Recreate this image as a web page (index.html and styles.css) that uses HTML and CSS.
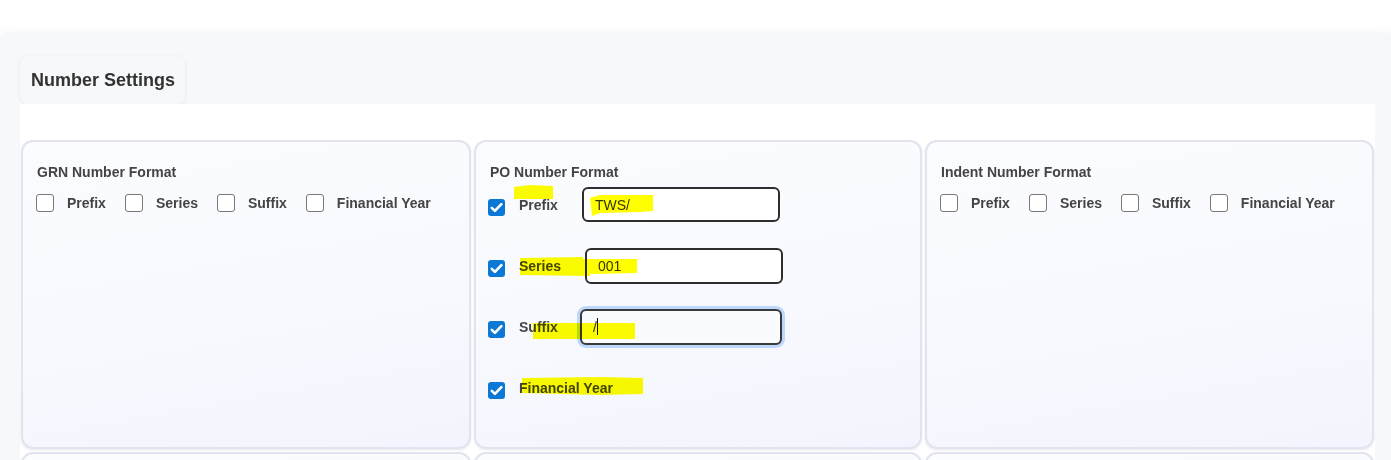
FILE: index.html
```html
<!DOCTYPE html>
<html lang="en">
<head>
<meta charset="utf-8">
<title>Number Settings</title>
<link rel="stylesheet" href="styles.css">
</head>
<body>
<div class="page">
  <div class="panel">
    <div class="tab">Number Settings</div>
    <div class="content">
      <div class="grid">
        <section class="card">
          <h3 class="card-title">GRN Number Format</h3>
          <div class="inline-opts">
            <label class="opt"><span class="box"></span><span class="lbl">Prefix</span></label>
            <label class="opt"><span class="box"></span><span class="lbl">Series</span></label>
            <label class="opt"><span class="box"></span><span class="lbl">Suffix</span></label>
            <label class="opt"><span class="box"></span><span class="lbl">Financial Year</span></label>
          </div>
        </section>
        <section class="card">
          <h3 class="card-title">PO Number Format</h3>
          <div class="stack">
            <div class="row">
              <span class="box checked"><svg viewBox="0 0 16 16" width="15" height="15"><path d="M3 8.4 L6.3 11.6 L13.2 4.4" fill="none" stroke="#fff" stroke-width="2.8" stroke-linecap="round" stroke-linejoin="round"/></svg></span>
              <span class="lbl">Prefix</span>
              <div class="field">TWS/</div>
            </div>
            <div class="row">
              <span class="box checked"><svg viewBox="0 0 16 16" width="15" height="15"><path d="M3 8.4 L6.3 11.6 L13.2 4.4" fill="none" stroke="#fff" stroke-width="2.8" stroke-linecap="round" stroke-linejoin="round"/></svg></span>
              <span class="lbl">Series</span>
              <div class="field tall">001</div>
            </div>
            <div class="row">
              <span class="box checked"><svg viewBox="0 0 16 16" width="15" height="15"><path d="M3 8.4 L6.3 11.6 L13.2 4.4" fill="none" stroke="#fff" stroke-width="2.8" stroke-linecap="round" stroke-linejoin="round"/></svg></span>
              <span class="lbl">Suffix</span>
              <div class="field focused">/<span class="caret"></span></div>
            </div>
            <div class="row">
              <span class="box checked"><svg viewBox="0 0 16 16" width="15" height="15"><path d="M3 8.4 L6.3 11.6 L13.2 4.4" fill="none" stroke="#fff" stroke-width="2.8" stroke-linecap="round" stroke-linejoin="round"/></svg></span>
              <span class="lbl">Financial Year</span>
            </div>
          </div>
        </section>
        <section class="card">
          <h3 class="card-title">Indent Number Format</h3>
          <div class="inline-opts">
            <label class="opt"><span class="box"></span><span class="lbl">Prefix</span></label>
            <label class="opt"><span class="box"></span><span class="lbl">Series</span></label>
            <label class="opt"><span class="box"></span><span class="lbl">Suffix</span></label>
            <label class="opt"><span class="box"></span><span class="lbl">Financial Year</span></label>
          </div>
        </section>
        <section class="card"></section>
        <section class="card"></section>
        <section class="card"></section>
      </div>
    </div>
  </div>
  <svg class="marks" width="1391" height="460" viewBox="0 0 1391 460">
    <polygon points="514,187 530,185 553,186 553,199 514,199" />
    <polygon points="590,198 600,195 653,195 653,211 640,212 600,213 592,216" />
    <polygon points="520,258 583,257 583,259 637,259 637,273 590,274 590,276 520,275" />
    <polygon points="533,323 635,323 635,339 533,339" />
    <polygon points="522,378 600,377 643,378 643,394 600,395 522,393" />
  </svg>
</div>
</body>
</html>
```

FILE: styles.css
```css
* { box-sizing: border-box; }

html, body {
  margin: 0;
  padding: 0;
  background: #ffffff;
}

body {
  font-family: "Liberation Sans", Arial, sans-serif;
  color: #444;
}

.page {
  position: relative;
  width: 1391px;
  height: 460px;
  overflow: hidden;
  padding-top: 33px;
}

.panel {
  background: #f7f8fa;
  border-top-left-radius: 8px;
  box-shadow: 0 -3px 8px rgba(0, 0, 0, 0.03);
  padding: 23px 16px 0 20px;
  min-height: 427px;
}

.tab {
  width: 165px;
  height: 48px;
  display: flex;
  align-items: center;
  padding-left: 11px;
  font-size: 18px;
  font-weight: bold;
  color: #333;
  background: #f7f8fa;
  border-radius: 8px;
  box-shadow: 0 1px 4px rgba(0, 0, 0, 0.07);
}

.content {
  background: #ffffff;
  padding: 36px 1px 0 1px;
}

.grid {
  display: grid;
  grid-template-columns: 450px 448px 449px;
  grid-auto-rows: 309px;
  column-gap: 3px;
  row-gap: 3px;
}

.card {
  border: 2px solid #e2e3ef;
  border-radius: 12px;
  background: linear-gradient(170deg, #fbfcff 0%, #f7f9fe 55%, #f2f5fd 100%);
  box-shadow: 0 1px 2px rgba(160, 165, 200, 0.25);
  padding: 22px 14px 0 14px;
}

.card-title {
  margin: 0;
  font-size: 14px;
  line-height: 16px;
  font-weight: bold;
  color: #444;
}

.inline-opts {
  display: flex;
  align-items: center;
  margin-top: 14px;
  margin-left: -1px;
}

.opt {
  display: flex;
  align-items: center;
  margin-right: 19px;
}

.box {
  flex: none;
  width: 18px;
  height: 18px;
  border: 1.5px solid #787878;
  border-radius: 3px;
  background: #ffffff;
  display: flex;
  align-items: center;
  justify-content: center;
}

.box.checked {
  width: 17px;
  height: 17px;
  border: none;
  background: #0b78d6;
}

.lbl {
  margin-left: 13px;
  font-size: 14px;
  font-weight: bold;
  color: #444;
  line-height: 18px;
}

.stack {
  display: flex;
  flex-direction: column;
  gap: 26px;
  margin-top: 7px;
  margin-left: -2px;
}

.row {
  display: flex;
  align-items: center;
  height: 35px;
}

.row .box {
  margin-top: 5px;
}

.row .lbl {
  margin-left: 14px;
}

.field {
  margin-left: 24px;
  width: 198px;
  height: 35px;
  border: 2px solid #2e2e2e;
  border-radius: 6px;
  background: #ffffff;
  padding-left: 11px;
  display: flex;
  align-items: center;
  font-size: 14px;
  color: #333;
}

.field.tall {
  height: 36px;
}

.field.focused {
  margin-left: 22px;
  width: 202px;
  height: 36px;
  box-shadow: 0 0 0 3px #bdd8fb;
  border-color: #3a3a3a;
  background: #fafbff;
}

.caret {
  display: inline-block;
  width: 1px;
  height: 17px;
  background: #111;
}

.marks {
  position: absolute;
  top: 0;
  left: 0;
  pointer-events: none;
  mix-blend-mode: multiply;
}

.marks polygon {
  fill: #ffff00;
}
```
